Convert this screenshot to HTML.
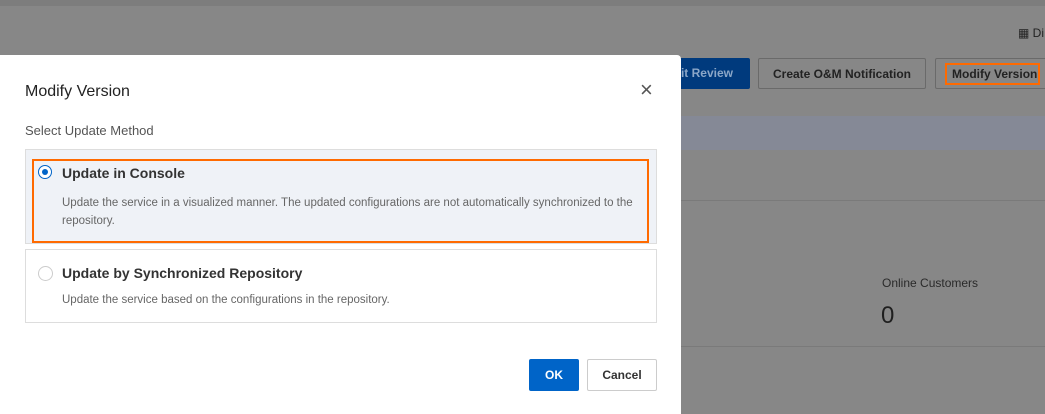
<!DOCTYPE html>
<html><head><style>
body{margin:0;width:1045px;height:414px;overflow:hidden;background:#878787;font-family:"Liberation Sans",sans-serif;position:relative}
.a{position:absolute;white-space:nowrap}
.btn{position:absolute;border:1px solid #6a6a6a;border-radius:2px;font-size:12px;font-weight:bold;color:#222;display:flex;align-items:center;justify-content:center;box-sizing:border-box;white-space:nowrap}
</style></head><body>
<div class="a" style="left:0;top:0;width:1045px;height:6px;background:#7d7d7d"></div>
<div class="a" style="left:1018px;top:26px;font-size:12px;color:#222">▦ Di</div>
<div class="a" style="left:660px;top:58px;width:90px;height:31px;background:#003a7d;border-radius:2px;color:#8ba7c8;font-size:12px;font-weight:bold;line-height:31px;text-align:right;padding-right:17px;box-sizing:border-box">nit Review</div>
<div class="btn" style="left:758px;top:58px;width:168px;height:31px">Create O&amp;M Notification</div>
<div class="btn" style="left:935px;top:58px;width:120px;height:31px"></div>
<div class="a" style="left:945px;top:63px;width:95px;height:22px;border:2px solid #ff6a00;font-size:12px;font-weight:bold;color:#222;line-height:18px;padding-left:5px;box-sizing:border-box">Modify Version</div>
<div class="a" style="left:681px;top:116px;width:364px;height:34px;background:#858996"></div>
<div class="a" style="left:681px;top:200px;width:364px;height:1px;background:#7a7a7a"></div>
<div class="a" style="left:681px;top:346px;width:364px;height:1px;background:#7a7a7a"></div>
<div class="a" style="left:882px;top:276px;font-size:12px;color:#2a2a2a">Online Customers</div>
<div class="a" style="left:881px;top:302px;font-size:24px;color:#1f1f1f">0</div>

<div class="a" style="left:0;top:55px;width:681px;height:359px;background:#fff;border-radius:0 4px 0 0">
 <div class="a" style="left:25px;top:28px;font-size:16px;color:#222">Modify Version</div>
 <div class="a" style="left:640px;top:24px;font-size:22px;color:#555;line-height:22px">×</div>
 <div class="a" style="left:25px;top:68px;font-size:13px;color:#555">Select Update Method</div>
 <div class="a" style="left:25px;top:94px;width:632px;height:95px;border:1px solid #ddd;background:#eff2f7;box-sizing:border-box"></div>
 <div class="a" style="left:32px;top:104px;width:617px;height:84px;border:2px solid #ff6a00;box-sizing:border-box"></div>
 <div class="a" style="left:38px;top:110px;width:14px;height:14px;border:1px solid #0064c8;border-radius:50%;box-sizing:border-box;background:#fff"><div class="a" style="left:3px;top:3px;width:6px;height:6px;border-radius:50%;background:#0064c8"></div></div>
 <div class="a" style="left:62px;top:110px;font-size:14px;font-weight:bold;color:#333">Update in Console</div>
 <div class="a" style="left:62px;top:139px;width:580px;font-size:11.5px;line-height:18px;color:#666;white-space:normal">Update the service in a visualized manner. The updated configurations are not automatically synchronized to the repository.</div>
 <div class="a" style="left:25px;top:194px;width:632px;height:74px;border:1px solid #ddd;box-sizing:border-box"></div>
 <div class="a" style="left:38px;top:211px;width:15px;height:15px;border:1px solid #ccc;border-radius:50%;box-sizing:border-box"></div>
 <div class="a" style="left:62px;top:210px;font-size:14px;font-weight:bold;color:#333">Update by Synchronized Repository</div>
 <div class="a" style="left:62px;top:239px;font-size:11.5px;color:#666">Update the service based on the configurations in the repository.</div>
 <div class="a" style="left:529px;top:304px;width:50px;height:32px;background:#0064c8;border-radius:2px;color:#fff;font-size:12px;font-weight:bold;text-align:center;line-height:32px">OK</div>
 <div class="a" style="left:587px;top:304px;width:70px;height:32px;border:1px solid #ccc;box-sizing:border-box;border-radius:2px;color:#333;font-size:12px;font-weight:bold;text-align:center;line-height:30px">Cancel</div>
</div>
</body></html>
